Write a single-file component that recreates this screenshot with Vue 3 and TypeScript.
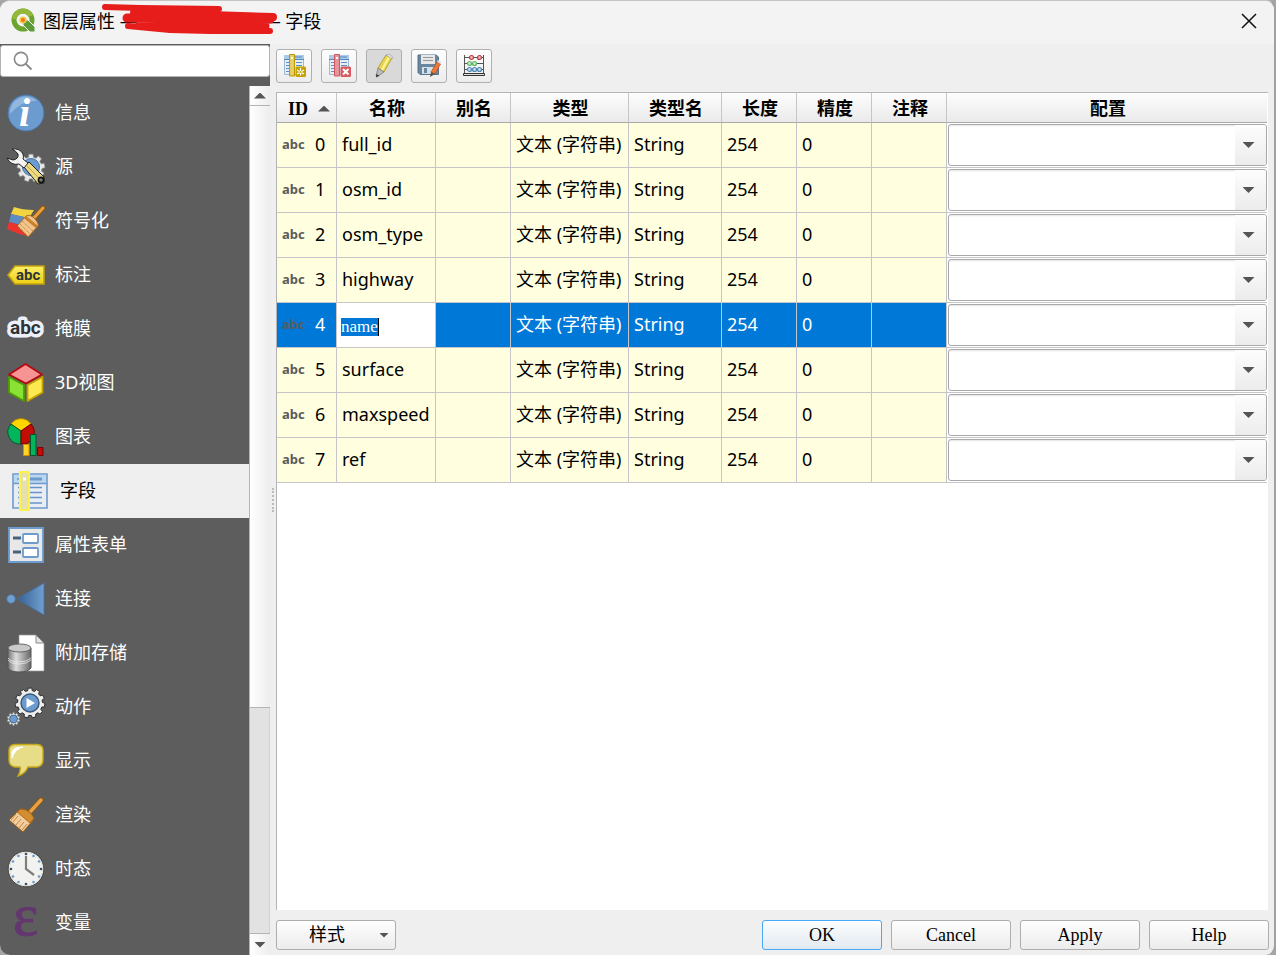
<script setup lang="ts">
import { ref } from 'vue'

interface Page {
  id: string
  label: string
}

interface Field {
  id: number
  name: string
}

const pages: Page[] = [
  { id: 'info', label: '信息' },
  { id: 'source', label: '源' },
  { id: 'symbology', label: '符号化' },
  { id: 'labels', label: '标注' },
  { id: 'mask', label: '掩膜' },
  { id: 'view3d', label: '3D视图' },
  { id: 'diagram', label: '图表' },
  { id: 'fields', label: '字段' },
  { id: 'form', label: '属性表单' },
  { id: 'join', label: '连接' },
  { id: 'storage', label: '附加存储' },
  { id: 'actions', label: '动作' },
  { id: 'display', label: '显示' },
  { id: 'render', label: '渲染' },
  { id: 'temporal', label: '时态' },
  { id: 'variables', label: '变量' },
]

const fields: Field[] = [
  'full_id', 'osm_id', 'osm_type', 'highway', 'name', 'surface', 'maxspeed', 'ref',
].map((name, id) => ({ id, name }))

const headers: string[] = ['名称', '别名', '类型', '类型名', '长度', '精度', '注释', '配置']
const current = ref('fields')
const selectedRow = ref(4)
const editedName = ref('name')
const search = ref('')

function gearPath(cx: number, cy: number, outer: number, inner: number, teeth: number): string {
  const points: string[] = []
  const step = (Math.PI * 2) / teeth
  for (let i = 0; i < teeth; i++) {
    const base = i * step - Math.PI / 2
    const corners: [number, number][] = [[-0.32, inner], [-0.22, outer], [0.22, outer], [0.32, inner]]
    for (const [offset, r] of corners) {
      const a = base + offset * step
      points.push(`${(cx + r * Math.cos(a)).toFixed(2)} ${(cy + r * Math.sin(a)).toFixed(2)}`)
    }
  }
  return `M${points.join('L')}Z`
}

const clockDots = Array.from({ length: 12 }, (_, i) => ({
  x: 19 + 15 * Math.sin((i * Math.PI) / 6),
  y: 19 - 15 * Math.cos((i * Math.PI) / 6),
  major: i % 3 === 0,
}))
</script>

<template>
  <div class="window">
    <header class="titlebar">
      <svg class="logo" viewBox="0 0 26 26" aria-hidden="true">
        <circle cx="13" cy="12" r="9" fill="none" stroke="#6ba52f" stroke-width="5" />
        <path d="M4 11A9 9 0 0 1 21 8" fill="none" stroke="#93b83a" stroke-width="5" />
        <path d="M13 12h5l7 7v5h-5l-7-7z" fill="#5c9b35" stroke="#f3f3f3" stroke-width="1" />
        <circle cx="13" cy="12" r="3.6" fill="#f3c84b" />
        <circle cx="13" cy="12" r="2" fill="#ee7913" />
      </svg>
      <h1 class="title"><span>图层属性 —</span><span class="redacted"></span><span>— 字段</span></h1>
      <svg class="scribble" viewBox="0 0 180 36" aria-hidden="true">
        <g fill="none" stroke="#e71d1c" stroke-linecap="round" stroke-linejoin="round">
          <path d="M5 6L40 7L119 8" stroke-width="6" />
          <path d="M34 12L110 14L173 16" stroke-width="8" />
          <path d="M27 17L170 18L40 22L100 25L165 25" stroke-width="9" />
          <path d="M28 25L70 29L110 30L170 30" stroke-width="6" />
        </g>
      </svg>
      <button class="close" type="button" aria-label="关闭">
        <svg viewBox="0 0 16 16"><path d="M1 1L15 15M15 1L1 15" stroke="#111" stroke-width="1.5" /></svg>
      </button>
    </header>

    <div class="body">
      <aside class="sidebar">
        <label class="search">
          <svg viewBox="0 0 20 20" aria-hidden="true">
            <circle cx="8" cy="8" r="6.6" fill="none" stroke="#8a8a8a" stroke-width="1.6" />
            <path d="M12.6 12.6L18.5 18.5" stroke="#8a8a8a" stroke-width="2" />
          </svg>
          <input v-model="search" type="text" aria-label="搜索">
        </label>
        <div class="list-area">
          <nav class="pages">
            <button
              v-for="page in pages" :key="page.id" type="button" class="page"
              :class="{ active: current === page.id }" @click="current = page.id"
            >
              <svg class="page-icon" viewBox="0 0 38 38" aria-hidden="true">
                <defs>
                  <linearGradient id="steel"><stop offset="0" stop-color="#777" /><stop offset=".35" stop-color="#ddd" /><stop offset="1" stop-color="#666" /></linearGradient>
                  <linearGradient id="blue"><stop offset="0" stop-color="#355f91" /><stop offset="1" stop-color="#6f9fd0" /></linearGradient>
                  <linearGradient id="gold" x2="0" y2="1"><stop offset="0" stop-color="#fbf06a" /><stop offset="1" stop-color="#edd013" /></linearGradient>
                </defs>
                <template v-if="page.id === 'info'">
                  <circle cx="19" cy="19" r="18" fill="#6c9bd0" stroke="#4875ab" />
                  <path d="M3 20A16 16 0 0 1 30 7Q14 6 3 20" fill="#94b7de" />
                  <text x="12" y="32" class="info-i">i</text>
                </template>
                <template v-else-if="page.id === 'source'">
                  <path :d="gearPath(24, 20, 14, 11, 9)" fill="#e8e8e8" stroke="#8b8b8b" stroke-width=".7" />
                  <circle cx="24" cy="19" r="8.5" fill="#6c9bd0" stroke="#4875ab" />
                  <path d="M17 19L22 14L37 29L37 35L31 36Z" fill="#ecd982" stroke="#222" />
                  <path d="M20 18L33 31" stroke="#bca54b" />
                  <circle cx="34" cy="32" r="2.6" fill="#777" stroke="#111" stroke-width="1.6" />
                  <path d="M5 1Q13 0 16 6Q17 9 16 11L21 15L17 20L12 16Q4 18 0 10L6 12Q12 11 11 6Q9 3 5 1Z" fill="#f3f3f3" stroke="#222" />
                </template>
                <template v-else-if="page.id === 'symbology'">
                  <path d="M7 5Q15 8 27 8L22 16Q12 14 4 12Z" fill="#f3d440" />
                  <path d="M4 12L22 16L17 24L2 20Z" fill="#5e8bc1" />
                  <path d="M2 20L16 24L20 34Q10 32 0 27Z" fill="#ed332e" />
                  <path d="M36 6L25 18" stroke="#8f560b" stroke-width="5" stroke-linecap="round" />
                  <path d="M36 6L25 18" stroke="#e9a044" stroke-width="3" stroke-linecap="round" />
                  <path d="M19 14Q24 12 28 17T31 24L21 35L10 24Z" fill="#f2c48b" stroke="#a7691d" />
                  <path d="M18 15L30 25" stroke="#c8802b" stroke-width="3" />
                  <path d="M13 22L23 32M15 19L26 29M11 24L21 34" stroke="#b87a36" stroke-dasharray="1 1" />
                </template>
                <template v-else-if="page.id === 'labels'">
                  <path d="M1 19L8 10H37V28H8Z" fill="url(#gold)" stroke="#c2a20c" stroke-width="1.6" />
                  <text x="9" y="24" class="abc-small">abc</text>
                </template>
                <template v-else-if="page.id === 'mask'">
                  <text x="3" y="24" class="abc-mask">abc</text>
                </template>
                <template v-else-if="page.id === 'view3d'">
                  <g stroke-width="1.8" stroke-linejoin="round">
                    <path d="M18.5 0L35 10.5L19 19.5L2 10.5Z" fill="#f69494" stroke="#b5090f" />
                    <path d="M2 13L17 21V37L2 28.5Z" fill="#8ae234" stroke="#4d9d0b" />
                    <path d="M35.5 13L20.5 21V37L35.5 28.5Z" fill="#fce94f" stroke="#c4a000" />
                  </g>
                </template>
                <template v-else-if="page.id === 'diagram'">
                  <path d="M14 13L4 6A12 12 0 0 1 24 6Z" fill="#ffd600" stroke="#b88b00" />
                  <path d="M14 13V26A12 12 0 0 1 4 6Z" fill="#00b55a" stroke="#07552e" />
                  <path d="M14 13L24 6A12 12 0 0 1 14 26Z" fill="#c20d05" stroke="#700" />
                  <path d="M16.5 26.5H22V37.5H16.5Z" fill="#ffd422" stroke="#dc8e00" />
                  <path d="M23.5 16.5H29V37.5H23.5Z" fill="#00b55a" stroke="#07552e" />
                  <path d="M30.5 29.5H36V37.5H30.5Z" fill="#c20d05" stroke="#700" />
                </template>
                <template v-else-if="page.id === 'fields'">
                  <path d="M1 2H35V36H1Z" fill="#e9edf2" stroke="#6d9bce" stroke-width="1.6" />
                  <path d="M2 3H34V11H2Z" fill="#b9d8ef" />
                  <path d="M1 11.5H35M5 7H9" stroke="#6d9bce" stroke-width="1.6" />
                  <path d="M17 5.5H30V8.5H17Z" fill="#6d9bce" />
                  <path d="M6 15.5H13M17 15.5H30M6 20.5H13M17 20.5H30M6 25.5H13M17 25.5H30M6 31H13M17 31H30" stroke="#6695ca" stroke-width="1.6" />
                  <path d="M8 0H17V38H8Z" fill="#e8dfb0" stroke="#fcf34a" stroke-width="2" />
                  <path d="M11 5.5H14V8.5H11Z" fill="#fff" />
                </template>
                <template v-else-if="page.id === 'form'">
                  <path d="M2 2H36V36H2Z" fill="#e8e8e8" stroke="#6d9bce" stroke-width="1.8" />
                  <rect x="16" y="8" width="15" height="9" rx="1" fill="#fff" stroke="#6d9bce" stroke-width="1.8" />
                  <rect x="16" y="22" width="15" height="9" rx="1" fill="#fff" stroke="#6d9bce" stroke-width="1.8" />
                  <path d="M6 12H14M6 26H14" stroke="#48627d" stroke-width="3" />
                </template>
                <template v-else-if="page.id === 'join'">
                  <circle cx="4" cy="19" r="4.2" fill="#6f9fd0" stroke="#4b78aa" stroke-width=".7" />
                  <path d="M10 19L37 3V35Z" fill="url(#blue)" stroke="#3f70a6" stroke-width=".8" />
                </template>
                <template v-else-if="page.id === 'storage'">
                  <path d="M12 1H29L37 9V37H12Z" fill="#fff" stroke="#999" stroke-width=".7" />
                  <path d="M29 1V9H37Z" fill="#e4e4e4" stroke="#888" />
                  <path d="M1 14V34Q3 38 12 38T24 34V14Z" fill="url(#steel)" stroke="#555" />
                  <ellipse cx="12.5" cy="14" rx="11.5" ry="4" fill="#c9c9c9" stroke="#666" />
                  <path d="M1 24Q4 28 12 28T24 24M1 26Q4 30 12 30T24 26" fill="none" stroke="#eee" stroke-width=".8" />
                </template>
                <template v-else-if="page.id === 'actions'">
                  <path :d="gearPath(23, 15, 15, 12.5, 11)" fill="#ededed" stroke="#2d2d2d" stroke-linejoin="round" />
                  <circle cx="23" cy="15" r="9" fill="#6c9bd0" stroke="#3a5878" stroke-width="1.4" />
                  <path d="M19.5 10L28 15L19.5 20Z" fill="#fff" />
                  <path :d="gearPath(6.5, 31, 6.5, 5.2, 10)" fill="#ededed" stroke="#777" stroke-width=".6" />
                  <circle cx="6.5" cy="31" r="4" fill="#6c9bd0" stroke="#3a5878" stroke-width=".8" />
                </template>
                <template v-else-if="page.id === 'display'">
                  <path d="M8 2.5H30Q36 3 36 8V18Q36 24 30 25H21Q18 32 11 34Q14 29 13 25H8Q2 24 2 18V8Q2 3 8 2.5Z" fill="#e7dc88" stroke="#c5a717" stroke-width="1.4" />
                  <path d="M5 16V10Q6 5 16 5Q8 7 5 16Z" fill="#fff" stroke="#fff" />
                </template>
                <template v-else-if="page.id === 'render'">
                  <path d="M34 4L23 16" stroke="#8f560b" stroke-width="5" stroke-linecap="round" />
                  <path d="M34 4L23 16" stroke="#e9a044" stroke-width="3.4" stroke-linecap="round" />
                  <path d="M13 13Q23 12 27 23L16 36L2 24Z" fill="#f4cd9c" stroke="#9c5f17" />
                  <path d="M14 13Q23 14 27 22L23 27L10 16Z" fill="#d48c30" stroke="#96580e" stroke-width=".7" />
                  <path d="M11 20L6 26M14 23L9 29M17 26L12 32M20 28L15 34M9 18L4 24" stroke="#bd8748" />
                </template>
                <template v-else-if="page.id === 'temporal'">
                  <circle cx="19" cy="19" r="17.8" fill="#f2f3f0" stroke="#333" stroke-width=".8" />
                  <circle cx="19" cy="19" r="16.5" fill="none" stroke="#deded9" />
                  <circle v-for="(dot, i) in clockDots" :key="i" :cx="dot.x" :cy="dot.y" r="1.3" :fill="dot.major ? '#32516f' : '#6c9bd0'" />
                  <path d="M19 6V19L27 25" fill="none" stroke="#7d7f79" stroke-width="2.2" />
                </template>
                <template v-else>
                  <text x="6" y="31" class="epsilon">ε</text>
                </template>
              </svg>
              <span class="page-label">{{ page.label }}</span>
            </button>
          </nav>
          <div class="scrollbar" aria-hidden="true">
            <span class="step"><i class="tri up"></i></span>
            <span class="thumb"></span>
            <span class="groove"></span>
            <span class="step down-step"><i class="tri down"></i></span>
          </div>
        </div>
      </aside>

      <div class="splitter" aria-hidden="true"><span></span></div>

      <main class="content">
        <div class="toolbar">
          <button type="button" aria-label="新建字段">
            <svg viewBox="0 0 24 24">
              <path d="M2.5 1.5H21.5V20.5H2.5Z" fill="#e9eef3" stroke="#9bb9d8" />
              <path d="M2 1H22V5H2Z" fill="#a9cbe8" /><path d="M2 5.5H22M13 3H20" stroke="#5489bd" />
              <path d="M4 8.5H7M14 8.5H20M4 11.5H7M14 11.5H20M4 14.5H7M4 17.5H7" stroke="#5d8fc4" />
              <path d="M7.5 .5H12.5V22H7.5Z" fill="#e6cd69" stroke="#bc9900" /><path d="M9 3H11V5H9Z" fill="#fff" />
              <rect x="13.5" y="12.5" width="10.5" height="10.5" rx="1.5" fill="#c5a200" />
              <path d="M18.5 14V21.5M15 16L22 20M22 16L15 20" stroke="#fff" stroke-width="1.2" /><circle cx="18.5" cy="18" r="1" fill="#c5a200" />
            </svg>
          </button>
          <button type="button" aria-label="删除字段">
            <svg viewBox="0 0 24 24">
              <path d="M2.5 1.5H21.5V20.5H2.5Z" fill="#e9eef3" stroke="#9bb9d8" />
              <path d="M2 1H22V5H2Z" fill="#a9cbe8" /><path d="M2 5.5H22M13 3H20" stroke="#5489bd" />
              <path d="M4 8.5H7M14 8.5H20M4 11.5H7M14 11.5H20M4 14.5H7M4 17.5H7" stroke="#5d8fc4" />
              <path d="M7.5 .5H12.5V22H7.5Z" fill="#e59499" stroke="#ce585e" /><path d="M9 3H11V5H9Z" fill="#fff" />
              <rect x="13.5" y="12.5" width="10.5" height="10.5" rx="1.5" fill="#d9595e" />
              <path d="M16 15L21.5 20.5M21.5 15L16 20.5" stroke="#fff" stroke-width="2" />
            </svg>
          </button>
          <button type="button" class="pressed" aria-label="切换编辑模式" aria-pressed="true">
            <svg viewBox="0 0 24 24">
              <path d="M6 14L14 1L20 4L12 18Z" fill="#e8d64e" stroke="#a99420" stroke-width=".8" />
              <path d="M10 16L17 3" stroke="#fff59a" stroke-width="2" />
              <path d="M14 1L15 0Q19 0 20.5 3L20 5Z" fill="#e0e0e0" stroke="#999" stroke-width=".6" />
              <path d="M6 14L12 18L5 23L4 22Z" fill="#bbb" stroke="#777" stroke-width=".7" /><path d="M4 20L7.5 21.5L4 23.5Z" fill="#444" />
            </svg>
          </button>
          <button type="button" aria-label="保存编辑">
            <svg viewBox="0 0 24 24">
              <path d="M1 1H19L21.5 3V20.5H3L1 18.5Z" fill="#67879f" stroke="#567389" />
              <path d="M4 1H18V10H4Z" fill="#e7e7e7" /><path d="M6 3.5H16M6 6.5H16" stroke="#999" />
              <path d="M5 13H17V20H5Z" fill="#d5dfe8" /><path d="M7 14H10V19H7Z" fill="#67879f" />
              <path d="M14 18L20 8L23.5 10L18 20Z" fill="#ec793c" stroke="#b94d12" stroke-width=".7" />
              <path d="M20 8L21 6L24 8L23.5 10Z" fill="#ddd" /><path d="M14 18L18 20L13 23Z" fill="#555" />
            </svg>
          </button>
          <button type="button" aria-label="字段计算器">
            <svg viewBox="0 0 24 24">
              <path d="M2.5 1V20M21.5 1V20M2 3.5H22M2 9.5H22M2 15.5H22" stroke="#555" />
              <path d="M1.5 19.5H22.5V21.5H1.5Z" fill="#ddd" stroke="#333" />
              <g stroke-width="1.2">
                <g fill="#f3b4b4" stroke="#c9343d"><circle cx="9.5" cy="3.5" r="2" /><circle cx="17.5" cy="3.5" r="2" /></g>
                <g fill="#c5ebc5" stroke="#5eb568"><circle cx="7.5" cy="9.5" r="2" /><circle cx="12.5" cy="9.5" r="2" /></g>
                <g fill="#c6dff2" stroke="#4d88b8"><circle cx="7.5" cy="15.5" r="2" /><circle cx="12.5" cy="15.5" r="2" /><circle cx="17.5" cy="15.5" r="2" /></g>
              </g>
            </svg>
          </button>
        </div>

        <div class="table-frame">
          <table>
            <colgroup>
              <col class="w-id"><col class="w-name"><col class="w-short"><col class="w-type"><col class="w-typename">
              <col class="w-short"><col class="w-short"><col class="w-short"><col>
            </colgroup>
            <thead>
              <tr>
                <th scope="col"><span class="id-head">ID<i class="tri sort"></i></span></th>
                <th v-for="head in headers" :key="head" scope="col">{{ head }}</th>
              </tr>
            </thead>
            <tbody>
              <tr v-for="field in fields" :key="field.id" :class="{ selected: field.id === selectedRow }">
                <td @click="selectedRow = field.id"><span class="id-cell"><b>abc</b>{{ field.id }}</span></td>
                <td v-if="field.id === 4" class="editing">
                  <input v-model="editedName" class="name-editor" type="text" aria-label="名称">
                </td>
                <td v-else>{{ field.name }}</td>
                <td></td>
                <td>文本 (字符串)</td>
                <td>String</td>
                <td>254</td>
                <td>0</td>
                <td></td>
                <td class="config">
                  <div class="combo">
                    <select :aria-label="`配置 ${field.name}`"><option></option></select>
                    <span class="combo-arrow" aria-hidden="true"><i class="tri down"></i></span>
                  </div>
                </td>
              </tr>
            </tbody>
          </table>
        </div>

        <footer class="actions">
          <button type="button" class="style-button"><span>样式</span><i class="tri down small"></i></button>
          <div class="dialog-buttons">
            <button type="button" class="default">OK</button>
            <button type="button">Cancel</button>
            <button type="button">Apply</button>
            <button type="button">Help</button>
          </div>
        </footer>
      </main>
    </div>
  </div>
</template>

<style>
body {
  margin: 0;
  background: #a5a5a5;
}
</style>

<style scoped>
* {
  box-sizing: border-box;
}

.window {
  display: flex;
  flex-direction: column;
  min-height: 100vh;
  overflow: hidden;
  border-top: 1px solid #c4c4c4;
  border-right: 2px solid #a0a0a0;
  border-radius: 10px;
  background: #efefef;
  color: #000;
  font: 18px/24px "Noto Sans", "Noto Sans CJK SC", sans-serif;
}

button,
input,
select {
  font: inherit;
  color: inherit;
}

.titlebar {
  position: relative;
  display: flex;
  align-items: center;
  height: 43px;
  padding: 0 17px 3px 10px;
  background: #f3f3f3;
}

.logo {
  width: 26px;
  height: 26px;
  margin-right: 7px;
}

.title {
  display: flex;
  flex: 1;
  margin: 0;
  font-size: 18px;
  font-weight: 400;
  white-space: nowrap;
}

.redacted {
  width: 125px;
}

.scribble {
  position: absolute;
  left: 100px;
  top: 0;
  width: 180px;
  height: 36px;
}

.close {
  display: flex;
  padding: 0;
  border: 0;
  background: none;
}

.close svg {
  width: 16px;
  height: 16px;
}

.body {
  display: flex;
  flex: 1;
}

.sidebar {
  display: flex;
  flex-direction: column;
  width: 270px;
  flex-shrink: 0;
  background: #5d5d5d;
}

.search {
  display: flex;
  align-items: center;
  height: 32px;
  margin: 1px 0 9px;
  padding: 0 12px;
  border: 1px solid #b4b4b4;
  border-radius: 3px;
  background: #fff;
}

.search svg {
  width: 20px;
  height: 20px;
  flex-shrink: 0;
}

.search input {
  flex: 1;
  min-width: 0;
  border: 0;
  outline: 0;
  background: none;
}

.list-area {
  display: flex;
  flex: 1;
}

.pages {
  flex: 1;
}

.page {
  display: flex;
  align-items: center;
  gap: 10px;
  width: 100%;
  height: 54px;
  padding: 0 7px;
  border: 0;
  background: none;
  color: #fff;
  text-align: left;
  white-space: nowrap;
}

.page.active {
  padding-left: 12px;
  background: #efefef;
  color: #000;
}

.page-icon {
  width: 38px;
  height: 38px;
  flex-shrink: 0;
  overflow: visible;
}

.page-label {
  padding-bottom: 2px;
}

.info-i {
  fill: #fff;
  font: italic bold 40px "Liberation Serif", serif;
}

.abc-small {
  fill: #2e3436;
  font: bold 15px Roboto, sans-serif;
}

.abc-mask {
  fill: #2e3436;
  stroke: #edf0fb;
  stroke-width: 7px;
  stroke-linejoin: round;
  paint-order: stroke;
  font: bold 19px Roboto, sans-serif;
}

.epsilon {
  fill: #633670;
  stroke: #633670;
  stroke-width: 1px;
  font: 60px "Liberation Serif", serif;
}

.scrollbar {
  display: flex;
  flex-direction: column;
  width: 21px;
  border-left: 1px solid #b4b4b4;
  background: #e2e2e2;
}

.step {
  display: flex;
  align-items: center;
  justify-content: center;
  height: 20px;
  border-bottom: 1px solid #b4b4b4;
  background: linear-gradient(90deg, #fff, #ededed);
}

.down-step {
  height: 22px;
  border-top: 1px solid #b4b4b4;
  border-bottom: 0;
}

.thumb {
  flex: 602;
  border-bottom: 1px solid #b4b4b4;
  background: linear-gradient(90deg, #fff, #ededed);
}

.groove {
  flex: 225;
  border-right: 1px solid #d2d2d2;
}

.tri {
  display: block;
  width: 12px;
  height: 6px;
  background: #555;
}

.tri.up,
.tri.sort {
  clip-path: polygon(50% 0, 100% 100%, 0 100%);
}

.tri.down {
  clip-path: polygon(0 0, 100% 0, 50% 100%);
}

.tri.small {
  width: 10px;
  height: 5px;
}

.splitter {
  display: flex;
  align-items: center;
  justify-content: center;
  width: 6px;
  flex-shrink: 0;
}

.splitter span {
  height: 24px;
  border-left: 2px dotted #bbb;
}

.content {
  display: flex;
  flex: 1;
  flex-direction: column;
  min-width: 0;
  padding: 5px 5px 5px 0;
}

.toolbar {
  display: flex;
  gap: 9px;
  margin-bottom: 9px;
}

.toolbar button {
  display: flex;
  align-items: center;
  justify-content: center;
  width: 36px;
  height: 34px;
  padding: 0;
  border: 1px solid #b0b0b0;
  border-radius: 3px;
  background: linear-gradient(#fefefe, #ececec);
}

.toolbar .pressed {
  background: #d9d9d9;
}

.toolbar svg {
  width: 24px;
  height: 24px;
}

.table-frame {
  flex: 1;
  margin-right: 1px;
  padding-right: 1px;
  border-top: 1px solid #b4b4b4;
  border-left: 1px solid #b4b4b4;
  background: #fff;
}

table {
  width: 100%;
  table-layout: fixed;
  border-collapse: separate;
  border-spacing: 0;
}

.w-id {
  width: 60px;
}

.w-name {
  width: 99px;
}

.w-short {
  width: 75px;
}

.w-type {
  width: 118px;
}

.w-typename {
  width: 93px;
}

th {
  height: 30px;
  padding: 2px 0 0 2px;
  border-right: 1px solid #c6c6c6;
  border-bottom: 1px solid #a9a9a9;
  background: linear-gradient(#fdfdfd, #eaeaea);
  font-family: "Liberation Serif", "Noto Sans CJK SC", serif;
  font-weight: 700;
}

th:last-child {
  border-right: 0;
}

.id-head {
  display: flex;
  align-items: center;
  gap: 10px;
  padding-left: 9px;
}

td {
  height: 45px;
  padding: 0 0 3px 5px;
  border-right: 1px solid #c5c5ca;
  border-bottom: 1px solid #c5c5ca;
  background: #ffffe0;
  white-space: nowrap;
}

.selected td {
  background: #0078d7;
  color: #fff;
}

.id-cell {
  display: flex;
  align-items: center;
  gap: 9px;
}

.id-cell b {
  width: 24px;
  color: #5b5b5b;
  font-size: 13px;
}

td.editing,
.selected td.editing {
  padding: 4px 0 0 4px;
  background: #fff;
}

.name-editor {
  display: block;
  width: 38px;
  height: 18px;
  padding: 0;
  border: 0;
  border-right: 1px solid #000;
  outline: 0;
  background: #0078d7;
  color: #fff;
  font-family: "Liberation Serif", serif;
  font-size: 17px;
}

td.config,
.selected td.config {
  padding: 1px 0 1px 1px;
  border-right: 0;
  background: #fff;
}

.combo {
  position: relative;
  height: 42px;
}

.combo select {
  width: 100%;
  height: 100%;
  border: 1px solid #a9a9a9;
  border-radius: 3px;
  outline: 0;
  appearance: none;
  background: linear-gradient(#e4e4e4, #fff 2px);
}

.combo-arrow {
  position: absolute;
  top: 1px;
  right: 1px;
  bottom: 1px;
  display: flex;
  align-items: center;
  justify-content: center;
  width: 31px;
  padding-right: 4px;
  border-radius: 0 2px 2px 0;
  background: linear-gradient(#fdfdfd, #ececec);
  pointer-events: none;
}

.actions {
  display: flex;
  justify-content: space-between;
  padding-top: 10px;
}

.actions button {
  width: 120px;
  height: 30px;
  padding: 0;
  border: 1px solid #adadad;
  border-radius: 3px;
  background: linear-gradient(#fefefe, #ececec);
  font-family: "Liberation Serif", "Noto Sans CJK SC", serif;
}

.actions .default {
  border-color: #45a9f5;
  background: linear-gradient(#fdfeff, #e1e9f0);
}

.actions .style-button {
  display: flex;
  align-items: center;
  justify-content: space-between;
  padding: 0 6px 0 32px;
}

.dialog-buttons {
  display: flex;
  gap: 9px;
}
</style>
